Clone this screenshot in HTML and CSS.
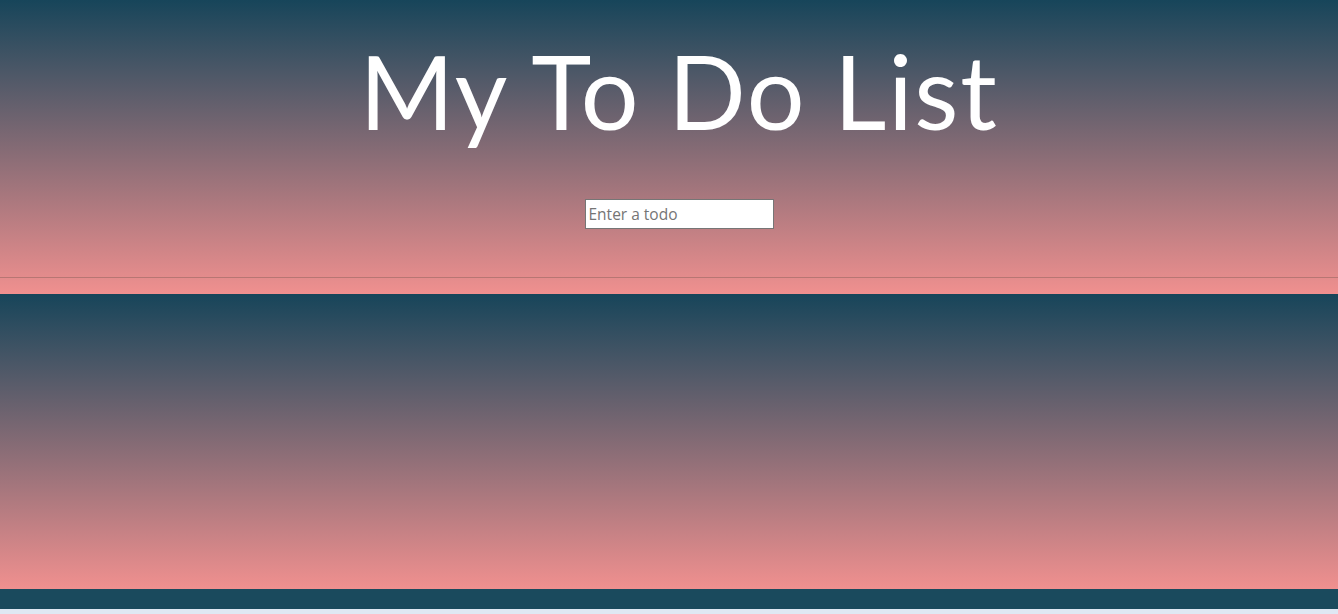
FILE: index.html
```html
<!DOCTYPE html>
<html lang="en">
<head>
<meta charset="utf-8">
<title>My To Do List</title>
<link rel="stylesheet" href="styles.css">
</head>
<body>
  <header class="hero">
    <div class="hero-inner">
      <h1 class="title">My To Do List</h1>
      <form class="todo-form">
        <input class="todo-input" type="text" placeholder="Enter a todo">
      </form>
    </div>
    <hr class="divider">
  </header>
  <main class="list-area">
    <ul class="todo-list"></ul>
  </main>
  <footer class="footer"></footer>
</body>
</html>
```
FILE: styles.css
```css
html, body {
  margin: 0;
  padding: 0;
}
body {
  background: #dfe8f3;
  font-family: "Lato", "Open Sans", sans-serif;
}
.hero {
  height: 294px;
  background: linear-gradient(to bottom, #17455a, #f0908f);
  display: flex;
  flex-direction: column;
}
.hero-inner {
  display: flex;
  flex-direction: column;
  align-items: center;
  padding-left: 20px;
}
.title {
  margin: 27px 0 0;
  height: 128px;
  color: #fff;
  font-family: "Lato", sans-serif;
  font-weight: 400;
  font-size: 102px;
  line-height: 128px;
  letter-spacing: 1.7px;
}
.todo-form {
  margin-top: 44px;
}
.todo-input {
  box-sizing: border-box;
  width: 189px;
  height: 30px;
  border: 1px solid #767676;
  padding: 1px 3px;
  font-family: "Open Sans", sans-serif;
  font-size: 15.5px;
  background: #fff;
  color: #333;
}
.todo-input::placeholder {
  color: #757575;
}
.divider {
  margin: 48px 0 0;
  border: 0;
  height: 1px;
  background: #b77673;
}
.list-area {
  height: 295px;
  background: linear-gradient(to bottom, #17455a, #f0908f);
}
.todo-list {
  margin: 0;
  padding: 0;
  list-style: none;
}
.footer {
  height: 20px;
  background: #1a4a5d;
}
```
